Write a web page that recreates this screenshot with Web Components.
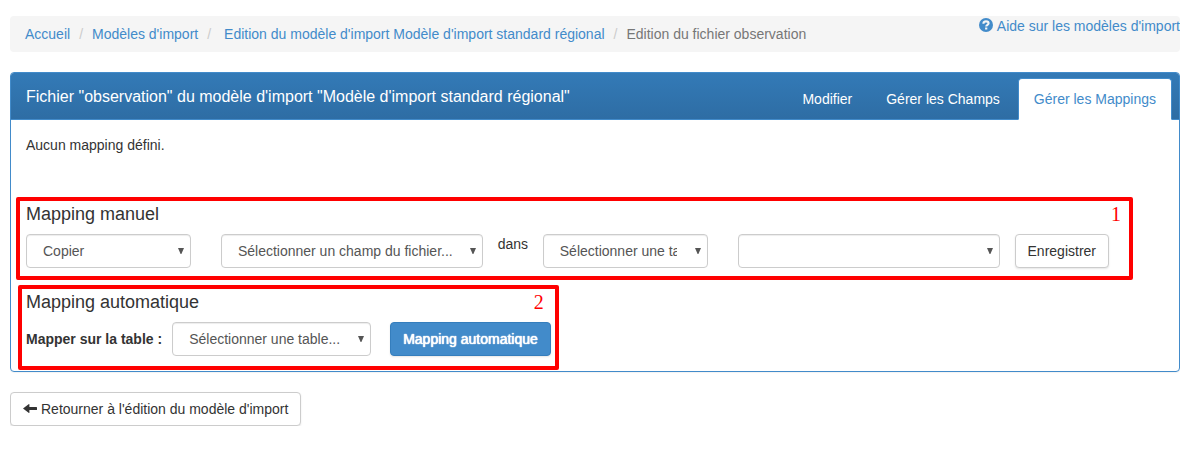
<!DOCTYPE html>
<html lang="fr">
<head>
<meta charset="utf-8">
<title>Edition du fichier observation</title>
<style>
  body {
    margin: 16px 16px 24px 10px;
    font: 14px/20px "Liberation Sans", Arial, sans-serif;
    color: #333;
    background: #fff;
  }
</style>
</head>
<body>
<import-page></import-page>

<template id="page-tpl">
  <style>
    :host { display: block; }
    app-breadcrumb, app-panel { margin-bottom: 20px; }
    .note { margin: 0 0 42px; padding: 15px 15px 0; }
    marked-section + marked-section { margin-top: 5px; }
    .manual { margin-left: 5px; margin-right: 46px; --pad: 3px 8px 8px 6px; --body-inset: 12px; }
    .auto { margin-left: 7px; margin-bottom: 1px; width: fit-content; --pad: 3px 4px 10px 4px; --number-inset: 7px; }
    .row { display: flex; gap: 15px; }
    .pair { flex: 1; min-width: 0; display: grid; grid-template-columns: 165fr 262fr; gap: 30px; }
    .word { width: 30px; }
    .auto .row { gap: 19px; }
  </style>
  <app-breadcrumb>
    <crumb-item href="#accueil">Accueil</crumb-item>
    <crumb-item href="#modeles">Modèles d'import</crumb-item>
    <crumb-item href="#modele" wide>Edition du modèle d'import Modèle d'import standard régional</crumb-item>
    <crumb-item>Edition du fichier observation</crumb-item>
    <help-link slot="aside" href="#aide">Aide sur les modèles d'import</help-link>
  </app-breadcrumb>
  <app-panel>
    <span slot="title">Fichier "observation" du modèle d'import "Modèle d'import standard régional"</span>
    <tab-link slot="tabs" href="#modifier">Modifier</tab-link>
    <tab-link slot="tabs" href="#champs">Gérer les Champs</tab-link>
    <tab-link slot="tabs" href="#mappings" active>Gérer les Mappings</tab-link>
    <p class="note">Aucun mapping défini.</p>
    <marked-section class="manual" heading="Mapping manuel" number="1">
      <div class="row">
        <div class="pair">
          <select-field name="Action"><option>Copier</option></select-field>
          <select-field name="Champ du fichier"><option>Sélectionner un champ du fichier...</option></select-field>
        </div>
        <span class="word">dans</span>
        <div class="pair">
          <select-field name="Table"><option>Sélectionner une table...</option></select-field>
          <select-field name="Champ de la table"><option></option></select-field>
        </div>
        <app-button>Enregistrer</app-button>
      </div>
    </marked-section>
    <marked-section class="auto" heading="Mapping automatique" number="2">
      <div class="row">
        <select-field label="Mapper sur la table :" style="--select-width: 199px"><option>Sélectionner une table...</option></select-field>
        <app-button primary>Mapping automatique</app-button>
      </div>
    </marked-section>
  </app-panel>
  <app-button>
    <svg slot="icon" width="14" height="14" viewBox="0 0 14 14" aria-hidden="true"><path fill="#333" d="M0 6.5 5.6 2.2Q6.4 1.7 6.4 2.6V5H13.4Q14 5 14 5.6V7.4Q14 8 13.4 8H6.4V10.4Q6.4 11.3 5.6 10.8Z"/></svg>Retourner à l'édition du modèle d'import</app-button>
</template>

<script>
  const define = (name, html, setup) => customElements.define(name, class extends HTMLElement {
    connectedCallback() {
      if (this.shadowRoot) return;
      this.attachShadow({ mode: "open" }).innerHTML = html;
      if (setup) setup(this, this.shadowRoot);
    }
  });

  define("app-breadcrumb", `
    <style>
      :host { display: flex; justify-content: space-between; align-items: flex-start;
              background: #f5f5f5; border-radius: 4px; }
      nav { display: flex; flex-wrap: wrap; padding: 8px 15px; }
    </style>
    <nav aria-label="Fil d'Ariane"><slot></slot></nav>
    <slot name="aside"></slot>`);

  define("crumb-item", `
    <style>
      :host { display: flex; }
      .sep { color: #ccc; padding: 0 9px; display: none; }
      :host(:not(:first-of-type)) .sep { display: block; }
      :host([wide]) .sep { padding-right: 13px; }
      a { color: #428bca; text-decoration: none; }
      .here { color: #777; }
    </style>
    <span class="sep">/</span><a><slot></slot></a>`, (el, root) => {
      const a = root.querySelector("a");
      if (el.hasAttribute("href")) a.href = el.getAttribute("href");
      else {
        const s = document.createElement("span");
        s.className = "here";
        s.setAttribute("aria-current", "page");
        s.append(document.createElement("slot"));
        a.replaceWith(s);
      }
    });

  define("help-link", `
    <style>
      :host { display: block; white-space: nowrap; }
      a { display: flex; gap: 4px; color: #428bca; text-decoration: none; }
      svg { margin-top: 2px; }
    </style>
    <a><svg width="14" height="14" viewBox="0 0 14 14" aria-hidden="true">
      <circle cx="7" cy="7" r="7" fill="#428bca"/>
      <path d="M4.4 5.7C4.4 3.9 5.5 3.4 7 3.4S9.6 4.2 9.6 5.3C9.6 6.8 7.2 6.8 7.2 8.6" fill="none" stroke="#f5f5f5" stroke-width="2.1"/>
      <path d="M6.1 9.5h2.2v2H6.1z" fill="#f5f5f5"/>
    </svg><slot></slot></a>`, (el, root) => { root.querySelector("a").href = el.getAttribute("href"); });

  define("app-panel", `
    <style>
      :host { display: block; border: 1px solid #428bca; border-radius: 4px;
              box-shadow: 0 1px 1px rgba(0,0,0,.05); }
      header { display: flex; justify-content: space-between; align-items: center;
               padding: 5px 7px 0 15px; color: #fff; border-bottom: 1px solid #428bca;
               border-radius: 3px 3px 0 0;
               background: linear-gradient(#337ab7, #2e6da4); }
      h3 { margin: 0 0 4px; font-size: 16px; font-weight: 400; line-height: 20px; }
      nav { display: flex; gap: 2px; margin-bottom: -1px; }
    </style>
    <header><h3><slot name="title"></slot></h3><nav aria-label="Onglets"><slot name="tabs"></slot></nav></header>
    <slot></slot>`);

  define("tab-link", `
    <style>
      :host { display: block; white-space: nowrap; }
      a { display: block; padding: 10px 15px; border: 1px solid transparent;
          border-radius: 4px 4px 0 0; color: #fff; text-decoration: none; }
      :host([active]) a { color: #428bca; background: #fff; border-color: #428bca #428bca #fff; }
    </style>
    <a><slot></slot></a>`, (el, root) => { root.querySelector("a").href = el.getAttribute("href"); });

  define("marked-section", `
    <style>
      :host { display: block; border: 4px solid #f00; border-radius: 2px; padding: var(--pad); }
      .head { display: flex; justify-content: space-between; margin-bottom: 10px; }
      h4 { margin: 0; font-size: 18px; font-weight: 400; line-height: 20px; }
      .number { font: 20px/20px "Liberation Serif", "Times New Roman", serif; color: #f00;
                margin-right: var(--number-inset, 0); }
      .body { margin-right: var(--body-inset, 0); }
    </style>
    <div class="head"><h4></h4><span class="number"></span></div>
    <div class="body"><slot></slot></div>`, (el, root) => {
      root.querySelector("h4").textContent = el.getAttribute("heading");
      root.querySelector(".number").textContent = el.getAttribute("number");
    });

  define("select-field", `
    <style>
      :host { display: flex; align-items: center; gap: 10px; min-width: 0; }
      label { font-weight: 700; white-space: nowrap; }
      label:empty { display: none; }
      .box { position: relative; width: var(--select-width, 100%); }
      select { appearance: none; display: block; box-sizing: border-box; width: 100%; height: 34px; margin: 0;
               padding: 6px 30px 6px 16px; border: 1px solid #ccc; border-radius: 4px;
               background: #fff; color: #555; font: inherit; text-overflow: clip;
               box-shadow: inset 0 1px 1px rgba(0,0,0,.075); }
      svg { position: absolute; right: 7px; top: 14px; pointer-events: none; }
    </style>
    <label for="s"></label>
    <div class="box"><select id="s"></select>
      <svg width="6" height="6" viewBox="0 0 6 6" aria-hidden="true"><path d="M0 0H6L3.4 6H2.6Z" fill="#555"/></svg></div>`,
    (el, root) => {
      const select = root.querySelector("select");
      select.append(...el.querySelectorAll("option"));
      if (el.hasAttribute("label")) root.querySelector("label").textContent = el.getAttribute("label");
      else select.setAttribute("aria-label", el.getAttribute("name"));
    });

  define("app-button", `
    <style>
      :host { display: inline-block; vertical-align: top; }
      button { display: flex; align-items: center; gap: 4px; margin: 0; padding: 6px 12px; white-space: nowrap;
               border: 1px solid #ccc; border-radius: 4px; background: #fff; color: #333; font: inherit;
               box-shadow: 0 1px 2px rgba(0,0,0,.1); }
      :host([primary]) button { background: #428bca; border-color: #357ebd; color: #fff;
               text-shadow: 0 0 1px #fff, 0 0 1px #fff; }
    </style>
    <button type="button"><slot name="icon"></slot><span><slot></slot></span></button>`);

  define("import-page", "", (el, root) => {
    root.append(document.getElementById("page-tpl").content.cloneNode(true));
  });
</script>
</body>
</html>
